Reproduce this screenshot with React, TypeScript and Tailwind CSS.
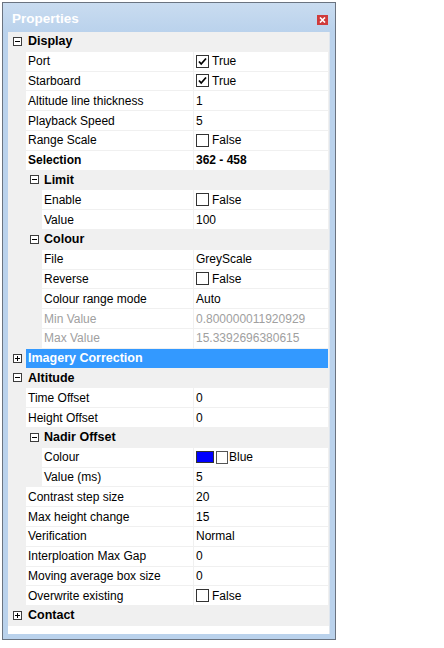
import React from "react";

type Row =
  | { kind: "cat"; label: string; depth: number; open: boolean; selected?: boolean }
  | {
      kind: "prop";
      label: string;
      value: string;
      depth: number;
      bold?: boolean;
      disabled?: boolean;
      check?: boolean;
      swatch?: string;
    };

const rows: Row[] = [
  { kind: "cat", label: "Display", depth: 0, open: true },
  { kind: "prop", label: "Port", value: "True", depth: 1, check: true },
  { kind: "prop", label: "Starboard", value: "True", depth: 1, check: true },
  { kind: "prop", label: "Altitude line thickness", value: "1", depth: 1 },
  { kind: "prop", label: "Playback Speed", value: "5", depth: 1 },
  { kind: "prop", label: "Range Scale", value: "False", depth: 1, check: false },
  { kind: "prop", label: "Selection", value: "362 - 458", depth: 1, bold: true },
  { kind: "cat", label: "Limit", depth: 1, open: true },
  { kind: "prop", label: "Enable", value: "False", depth: 2, check: false },
  { kind: "prop", label: "Value", value: "100", depth: 2 },
  { kind: "cat", label: "Colour", depth: 1, open: true },
  { kind: "prop", label: "File", value: "GreyScale", depth: 2 },
  { kind: "prop", label: "Reverse", value: "False", depth: 2, check: false },
  { kind: "prop", label: "Colour range mode", value: "Auto", depth: 2 },
  { kind: "prop", label: "Min Value", value: "0.800000011920929", depth: 2, disabled: true },
  { kind: "prop", label: "Max Value", value: "15.3392696380615", depth: 2, disabled: true },
  { kind: "cat", label: "Imagery Correction", depth: 0, open: false, selected: true },
  { kind: "cat", label: "Altitude", depth: 0, open: true },
  { kind: "prop", label: "Time Offset", value: "0", depth: 1 },
  { kind: "prop", label: "Height Offset", value: "0", depth: 1 },
  { kind: "cat", label: "Nadir Offset", depth: 1, open: true },
  { kind: "prop", label: "Colour", value: "Blue", depth: 2, swatch: "#0000ff" },
  { kind: "prop", label: "Value (ms)", value: "5", depth: 2 },
  { kind: "prop", label: "Contrast step size", value: "20", depth: 1 },
  { kind: "prop", label: "Max height change", value: "15", depth: 1 },
  { kind: "prop", label: "Verification", value: "Normal", depth: 1 },
  { kind: "prop", label: "Interploation Max Gap", value: "0", depth: 1 },
  { kind: "prop", label: "Moving average box size", value: "0", depth: 1 },
  { kind: "prop", label: "Overwrite existing", value: "False", depth: 1, check: false },
  { kind: "cat", label: "Contact", depth: 0, open: false },
];

const font = { fontFamily: '"Liberation Sans", Arial, sans-serif' };

const Expander: React.FC<{ open: boolean }> = ({ open }) => (
  <svg width="9" height="9" viewBox="0 0 9 9" className="shrink-0">
    <rect x="0.5" y="0.5" width="8" height="8" fill="#fff" stroke="#3c3c3c" />
    <line x1="2" y1="4.5" x2="7" y2="4.5" stroke="#000" />
    {!open && <line x1="4.5" y1="2" x2="4.5" y2="7" stroke="#000" />}
  </svg>
);

const CheckBox: React.FC<{ checked: boolean }> = ({ checked }) => (
  <svg width="13" height="13" viewBox="0 0 13 13" className="shrink-0 mr-[3px]">
    <rect x="0.5" y="0.5" width="12" height="12" fill="#fff" stroke="#333" />
    {checked && (
      <path d="M3 6.5 L5.2 9 L10 3.5" fill="none" stroke="#000" strokeWidth="1.8" />
    )}
  </svg>
);

const PropRow: React.FC<{ row: Row }> = ({ row }) => {
  if (row.kind === "cat") {
    return (
      <div className="flex h-[18.8px] bg-[#f0f0f0]">
        <div
          className={
            row.depth === 0
              ? "w-[18px] shrink-0 flex items-center pl-[5px]"
              : "w-[34px] shrink-0 flex items-center pl-[22px]"
          }
        >
          <Expander open={row.open} />
        </div>
        <div
          className={
            "flex-1 flex items-center pl-[2px] font-bold text-[12.5px] mr-[1px] " +
            (row.selected ? "bg-[#3399ff] text-white" : "text-black")
          }
        >
          {row.label}
        </div>
      </div>
    );
  }
  const textColor = row.disabled ? "text-[#a0a0a0]" : "text-black";
  return (
    <div className="flex h-[18.8px] bg-[#f0f0f0] text-[12px]">
      <div className={row.depth === 1 ? "w-[18px] shrink-0" : "w-[34px] shrink-0"} />
      <div
        className={
          "flex items-center bg-white pl-[2px] whitespace-nowrap overflow-hidden " +
          (row.depth === 1 ? "w-[167px]" : "w-[151px]") +
          " " +
          textColor +
          (row.bold ? " font-bold" : "")
        }
      >
        {row.label}
      </div>
      <div
        className={
          "flex-1 flex items-center bg-white ml-[1px] mr-[1px] pl-[2px] whitespace-nowrap " +
          textColor +
          (row.bold ? " font-bold" : "")
        }
      >
        {row.check !== undefined && <CheckBox checked={row.check} />}
        {row.swatch && (
          <>
            <span className="w-[18px] h-[12px] border border-[#333] bg-[#0000ff] mr-[2px]" />
            <span className="w-[12px] h-[13px] border border-[#555] bg-white mr-[1px]" />
          </>
        )}
        {row.value}
      </div>
    </div>
  );
};

const App: React.FC = () => {
  return (
    <div className="w-[444px] h-[648px] bg-white pt-[2px] pl-[2px]" style={font}>
      <div className="w-[334px] h-[638px] border border-[#6a7380] bg-[#bad2ec] flex flex-col">
        {/* Title bar */}
        <div className="h-[29px] shrink-0 flex items-center justify-between pl-[9px] pr-[7px] pt-[4px] bg-gradient-to-b from-[#c9dcf0] to-[#bad2ec]">
          <span className="text-white font-bold text-[13.5px]">Properties</span>
          <span className="w-[11px] h-[10px] bg-[#cf3b3b] flex items-center justify-center">
            <svg width="7" height="6" viewBox="0 0 7 6">
              <path d="M1 0.5 L6 5.5 M6 0.5 L1 5.5" stroke="#fff" strokeWidth="1.6" />
            </svg>
          </span>
        </div>

        {/* Grid */}
        <div className="mx-[5px] mb-[5px] flex-1 bg-white border-r border-[#dfe6ee]">
          <div className="flex flex-col gap-px bg-[#f0f0f0] pb-px">
            {rows.map((r, i) => (
              <PropRow key={i} row={r} />
            ))}
          </div>
        </div>
      </div>
    </div>
  );
};

export default App;
